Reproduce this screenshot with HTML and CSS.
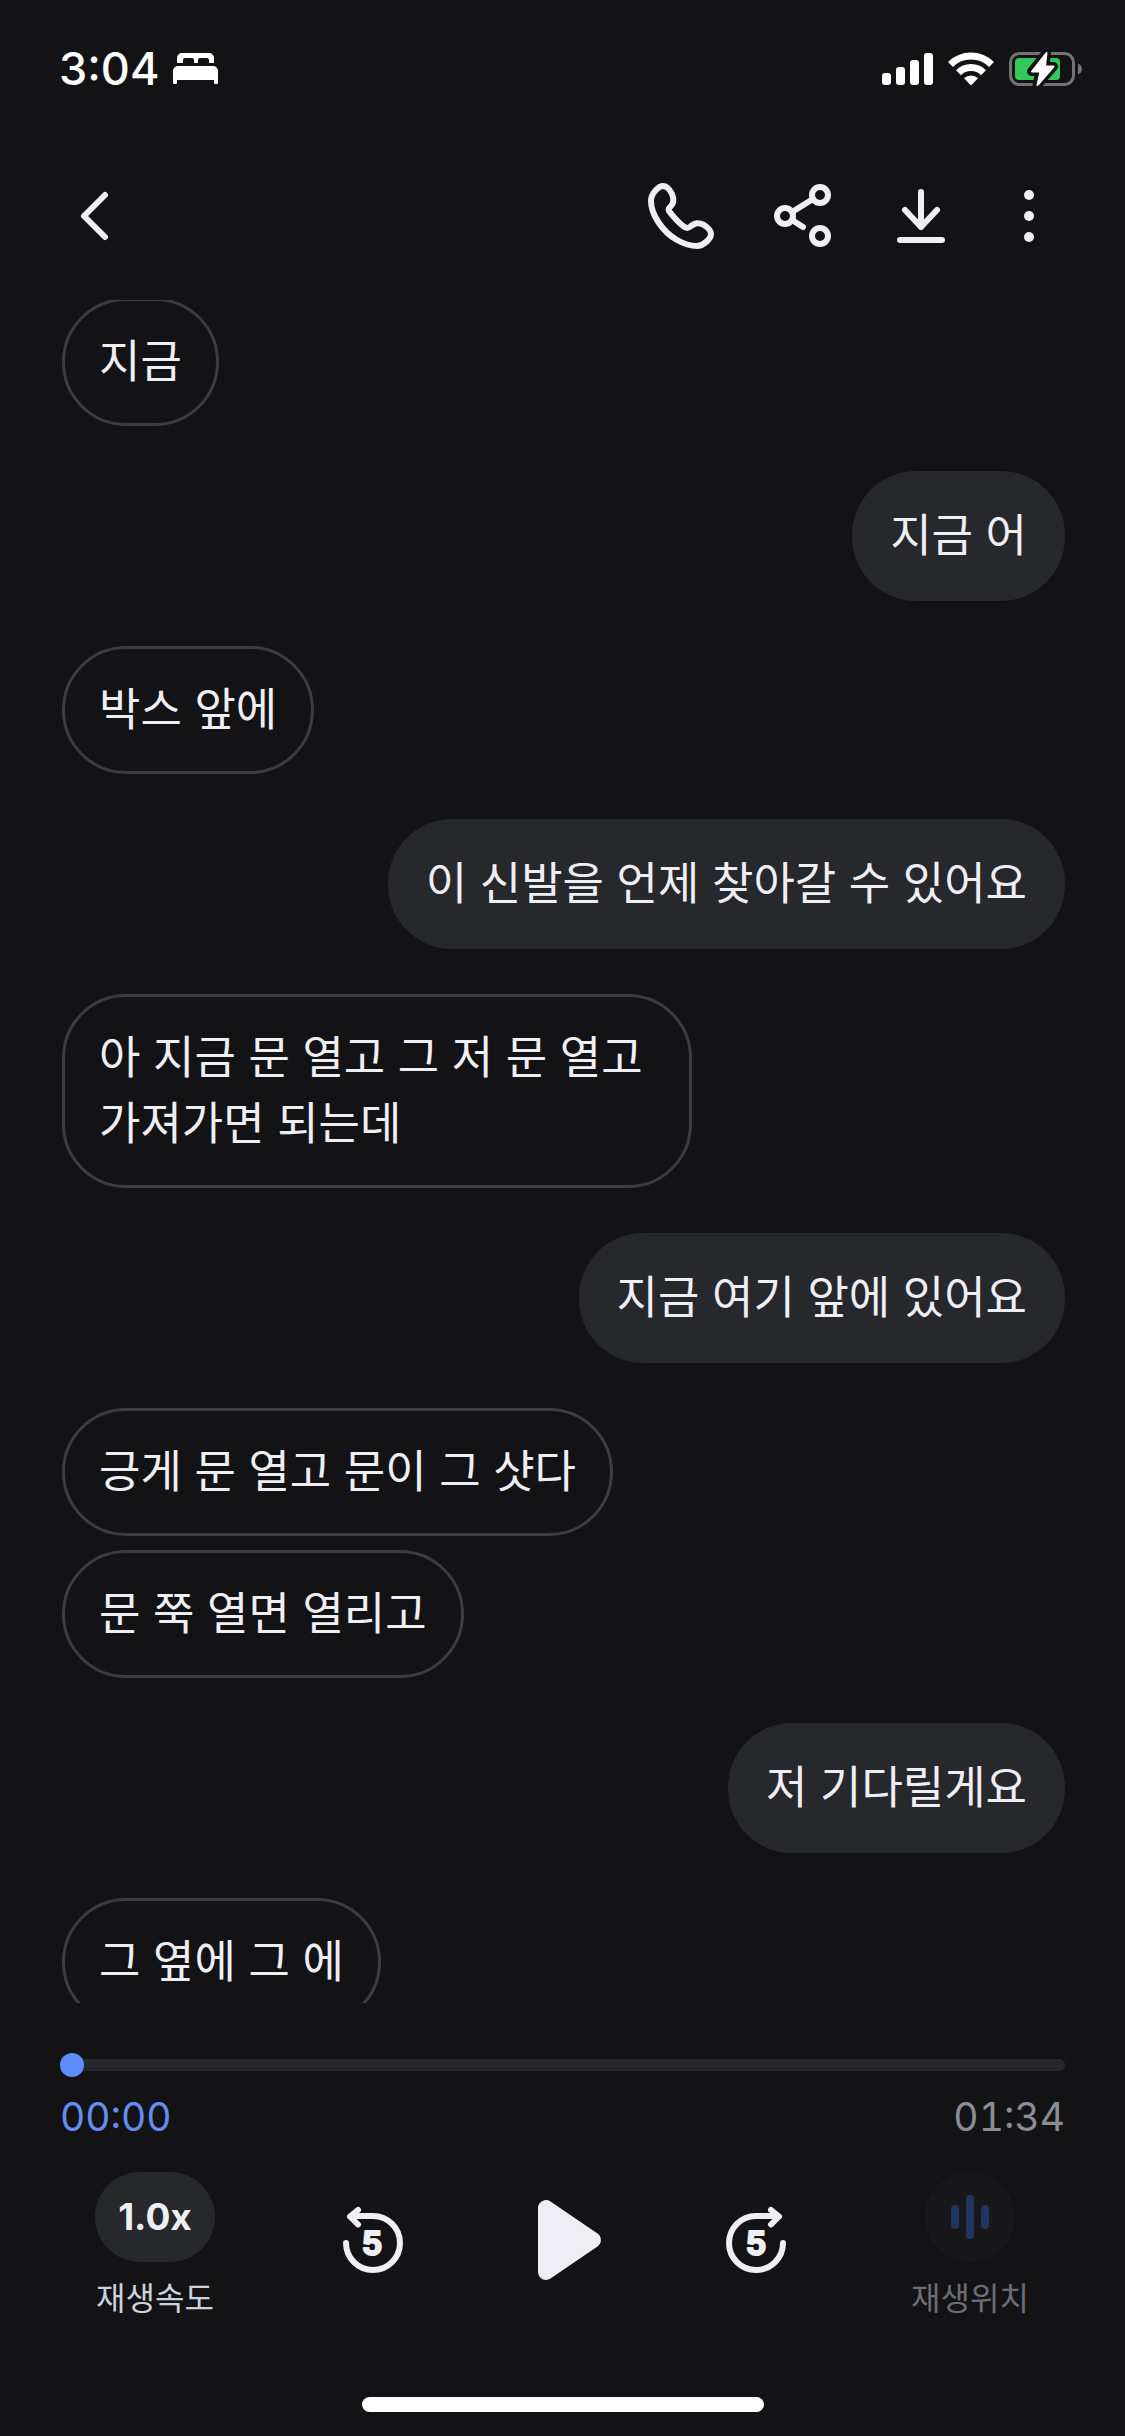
FILE: index.html
```html
<!DOCTYPE html>
<html lang="ko">
<head>
<meta charset="utf-8">
<meta name="viewport" content="width=device-width, initial-scale=1">
<title>통화 녹음</title>
<link rel="stylesheet" href="styles.css">
</head>
<body>
<div class="app">
  <div class="status">
    <div class="status-left">
      <span class="clock">3:04</span>
      <svg width="46" height="32" viewBox="0 0 46 32" fill="#fff" aria-hidden="true">
        <path d="M4 10V5a5 5 0 0 1 5-5h27a5 5 0 0 1 5 5v5h-5V7a2 2 0 0 0-2-2h-7a2 2 0 0 0-2 2v3h-4V7a2 2 0 0 0-2-2h-7a2 2 0 0 0-2 2v3z"/>
        <path d="M0 30V18a5 5 0 0 1 5-5h35a5 5 0 0 1 5 5v12q0 1-1 1h-2q-1 0-1-1v-3H4v3q0 1-1 1H1q-1 0-1-1z"/>
      </svg>
    </div>
    <div class="status-right">
      <svg width="51" height="34" viewBox="0 0 51 34" fill="#fff" aria-hidden="true">
        <rect x="0" y="21" width="9" height="12" rx="3"/>
        <rect x="14" y="15" width="9" height="18" rx="3"/>
        <rect x="28" y="8" width="9" height="25" rx="3"/>
        <rect x="42" y="1" width="9" height="32" rx="3"/>
      </svg>
      <svg width="46" height="34" viewBox="0 0 46 34" fill="none" stroke="#fff" stroke-width="7" aria-hidden="true">
        <path d="M2.500 12.500a29 29 0 0 1 41 0"/>
        <path d="M10.500 20.800a17.600 17.600 0 0 1 25 0"/>
        <path d="M16 26.300a10 10 0 0 1 14 0l-6 6.200q-1 1-2 0z" fill="#fff" stroke="none"/>
      </svg>
      <svg class="battery" width="73" height="36" viewBox="0 0 73 36" aria-hidden="true">
        <rect x="1.500" y="2.500" width="63" height="31" rx="9" fill="none" stroke="#737375" stroke-width="3"/>
        <path d="M69 12.500q4 1.500 4 5.500t-4 5.500z" fill="#737375"/>
        <rect x="6" y="7" width="45" height="22" rx="4" fill="#34c759"/>
        <path d="M37.500 1.500L22.500 20.500h8.500l-3 14L44.500 15.500H36z" fill="#131315" stroke="#131315" stroke-width="9" stroke-linejoin="round"/>
        <path d="M37.500 2L23 20.500h8.500l-3 13.500L44.500 15.500H36z" fill="#fff" stroke="#fff" stroke-width="2" stroke-linejoin="round"/>
      </svg>
    </div>
  </div>

  <header class="toolbar">
    <button class="icon-btn" aria-label="뒤로">
      <svg width="72" height="72" viewBox="0 0 72 72"><path d="M45 15L24 36l21 21"/></svg>
    </button>
    <div class="actions">
      <button class="icon-btn" aria-label="전화">
        <svg width="72" height="72" viewBox="0 0 72 72"><path d="M18 6C14 6 6 13 6 21C6 28 8 34 13.300 42C19 51 25 56 32 60C39 64 46 66 52 66C58 66 66 59 66 54C66 50 62 47 59 45C53 42 50 43 46 46C43 49 41 48 38 46C33 42 27 35 24 31C23 29 24 28 26 26C29 23 29 19 27 14C25 10 22 6 18 6Z"/></svg>
      </button>
      <button class="icon-btn" aria-label="공유">
        <svg width="72" height="72" viewBox="0 0 72 72"><circle cx="24" cy="36" r="8"/><circle cx="59" cy="15" r="8"/><circle cx="59" cy="56" r="8"/><path d="M31 32L52 19M31 40l11 7"/></svg>
      </button>
      <button class="icon-btn" aria-label="저장">
        <svg width="72" height="72" viewBox="0 0 72 72"><path d="M44 12v35M28 30l16 17 16-17M23 60h42"/></svg>
      </button>
      <button class="icon-btn" aria-label="더보기">
        <svg width="72" height="72" viewBox="0 0 72 72"><g fill="#eeeef4" stroke="none"><circle cx="36" cy="15" r="5"/><circle cx="36" cy="36" r="5"/><circle cx="36" cy="57" r="5"/></g></svg>
      </button>
    </div>
  </header>

  <main class="chat">
    <ul class="turns">
      <li class="turn"><p class="bubble">지금</p></li>
      <li class="turn mine"><p class="bubble">지금 어</p></li>
      <li class="turn"><p class="bubble">박스 앞에</p></li>
      <li class="turn mine"><p class="bubble">이 신발을 언제 찾아갈 수 있어요</p></li>
      <li class="turn"><p class="bubble">아 지금 문 열고 그 저 문 열고 가져가면 되는데</p></li>
      <li class="turn mine"><p class="bubble">지금 여기 앞에 있어요</p></li>
      <li class="turn"><p class="bubble">긍게 문 열고 문이 그 샷다</p><p class="bubble">문 쭉 열면 열리고</p></li>
      <li class="turn mine"><p class="bubble">저 기다릴게요</p></li>
      <li class="turn"><p class="bubble">그 옆에 그 에</p></li>
    </ul>
  </main>

  <footer class="player">
    <input class="seek" type="range" min="0" max="94" value="0" aria-label="재생 위치">
    <div class="times"><span class="now">00:00</span><span>01:34</span></div>
    <div class="controls">
      <button class="option">
        <span class="speed">1.0x</span>
        <span class="caption">재생속도</span>
      </button>
      <div class="transport">
        <button class="icon-btn" aria-label="5초 뒤로">
          <svg width="72" height="72" viewBox="0 0 72 72"><path d="M9 39a27 27 0 1 0 27-27H14M21 6l-8 6.500 8 8"/><text class="five" x="35" y="51">5</text></svg>
        </button>
        <button class="icon-btn" aria-label="재생">
          <svg width="96" height="96" viewBox="0 0 96 96"><path d="M31 16v64l47-32z" fill="#eeeef4" stroke-width="16"/></svg>
        </button>
        <button class="icon-btn" aria-label="5초 앞으로">
          <svg width="72" height="72" viewBox="0 0 72 72"><path d="M66 39a27 27 0 1 1-27-27H61M54 6l8 6.500-8 8"/><text class="five" x="39" y="51">5</text></svg>
        </button>
      </div>
      <button class="option" disabled>
        <span class="locate">
          <svg width="38" height="44" viewBox="0 0 38 44" fill="#20365f" aria-hidden="true"><rect x="0" y="10" width="8" height="24" rx="4"/><rect x="15" y="0" width="8" height="44" rx="4"/><rect x="30" y="10" width="8" height="24" rx="4"/></svg>
        </span>
        <span class="caption">재생위치</span>
      </button>
    </div>
    <div class="home"></div>
  </footer>
</div>
</body>
</html>
```
FILE: styles.css
```css
* {
  box-sizing: border-box;
}

body {
  margin: 0;
  background: #131315;
  color: #eeeef4;
  font-family: Inter, "Noto Sans CJK KR", sans-serif;
}

button {
  padding: 0;
  border: 0;
  background: none;
  color: inherit;
  font: inherit;
}

svg {
  display: block;
}

.app {
  display: flex;
  flex-direction: column;
  height: 100vh;
}

/* Status bar */
.status {
  display: flex;
  flex: none;
  align-items: center;
  justify-content: space-between;
  height: 138px;
  padding: 0 43px 0 59px;
  color: #fff;
}

.status-left {
  display: flex;
  align-items: center;
  gap: 14px;
}

.status-right {
  display: flex;
  align-items: center;
  gap: 15px;
}

.clock {
  font-size: 45px;
  font-weight: 500;
  line-height: 54px;
}

/* Toolbar */
.toolbar {
  display: flex;
  flex: none;
  align-items: center;
  justify-content: space-between;
  height: 162px;
  padding: 0 60px 6px;
}

.actions {
  display: flex;
  gap: 44px;
}

.icon-btn svg {
  fill: none;
  stroke: #eeeef4;
  stroke-width: 6;
  stroke-linecap: round;
  stroke-linejoin: round;
}

/* Transcript */
.chat {
  flex: 1 1 0;
  min-height: 0;
  overflow: hidden;
  padding: 0 60px;
}

.turns {
  display: flex;
  flex-direction: column;
  gap: 44px;
  margin: -3px 0 0;
  padding: 0;
  list-style: none;
}

.turn {
  display: flex;
  flex-direction: column;
  align-items: flex-start;
  gap: 12px;
}

.bubble {
  max-width: 630px;
  margin: 1px 2px;
  padding: 25px 34px 31px;
  border: 3px solid #3d3d40;
  border-radius: 64px;
  font-family: "Noto Sans CJK KR", sans-serif;
  font-size: 45px;
  line-height: 66px;
  word-break: keep-all;
}

.mine {
  align-items: flex-end;
}

.mine .bubble {
  max-width: 100%;
  margin: 0;
  padding: 29px 38px 35px;
  border: 0;
  background: #27282c;
}

/* Player */
.player {
  display: flex;
  flex: none;
  flex-direction: column;
  padding: 50px 60px 24px;
}

.seek {
  width: 100%;
  height: 24px;
  margin: 0;
  appearance: none;
  background: none;
}

.seek::-webkit-slider-runnable-track {
  height: 12px;
  border-radius: 6px;
  background: #27282c;
}

.seek::-webkit-slider-thumb {
  width: 24px;
  height: 24px;
  margin-top: -6px;
  appearance: none;
  border-radius: 50%;
  background: #5e8dff;
}

.times {
  display: flex;
  justify-content: space-between;
  margin-top: 20px;
  color: #8b8d95;
  font-size: 39px;
  font-variant-numeric: tabular-nums;
  line-height: 40px;
}

.now {
  color: #638df0;
}

.controls {
  display: flex;
  align-items: flex-start;
  justify-content: space-between;
  margin-top: 35px;
  padding: 0 35px;
}

.option {
  display: flex;
  flex-direction: column;
  align-items: center;
  gap: 14px;
  width: 120px;
}

.speed {
  width: 120px;
  border-radius: 45px;
  background: #27282c;
  font-size: 37px;
  font-weight: 700;
  line-height: 90px;
}

.locate {
  display: flex;
  align-items: center;
  justify-content: center;
  width: 90px;
  height: 90px;
  border-radius: 50%;
  background: #18181a;
}

.caption {
  color: #cdd1dc;
  font-family: "Noto Sans CJK KR", sans-serif;
  font-size: 32px;
  line-height: 40px;
}

.option:disabled .caption {
  color: #6b6d74;
}

.transport {
  display: flex;
  align-items: center;
  gap: 106px;
  height: 136px;
}

.icon-btn .five {
  fill: #eeeef4;
  stroke-width: 2;
  font-size: 32px;
  font-weight: 700;
  text-anchor: middle;
}

.home {
  align-self: center;
  width: 40%;
  height: 15px;
  margin-top: 81px;
  border-radius: 8px;
  background: #fff;
}
```
